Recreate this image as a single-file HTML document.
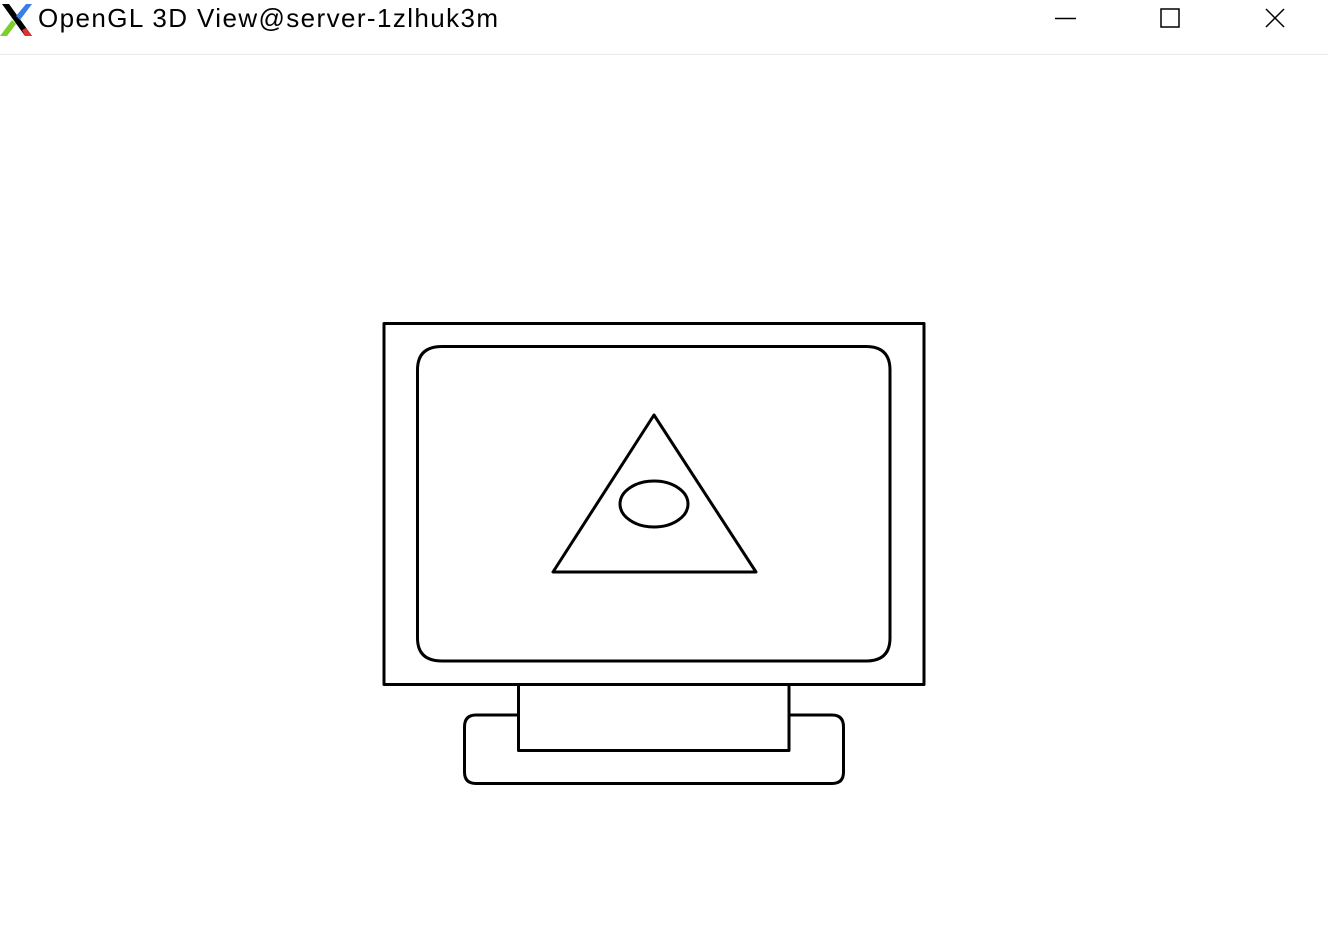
<!DOCTYPE html>
<html><head><style>
body{margin:0;width:1328px;height:948px;background:#fff;overflow:hidden;font-family:"Liberation Sans",sans-serif}
.bar{position:absolute;left:0;top:0;width:1328px;height:54px;border-bottom:1px solid #e8ecf0}
.t{position:absolute;left:38px;top:3px;font-size:26px;letter-spacing:1.4px;color:#000}
</style></head><body>
<div class="bar">
<svg style="position:absolute;left:0;top:2px" width="34" height="36" viewBox="0 0 34 36">
<polygon points="2,2 9,2 32,34 25,34" fill="#000"/>
<polygon points="26,2 32,2 20,18 16,14" fill="#3a7ee8"/>
<polygon points="0,34 7,34 16,22 12,18" fill="#7ccf2a"/>
<polygon points="25,34 32,34 26,26 22,28" fill="#e23030"/>
</svg>
<div class="t">OpenGL 3D View@server-1zlhuk3m</div>
<svg style="position:absolute;left:1050px;top:5px" width="240" height="30">
<line x1="5" y1="13.5" x2="26" y2="13.5" stroke="#000" stroke-width="1.5"/>
<rect x="111" y="4" width="18" height="18" fill="none" stroke="#000" stroke-width="1.5"/>
<path d="M216 4 L234 22 M234 4 L216 22" stroke="#000" stroke-width="1.5"/>
</svg>
</div>
<svg style="position:absolute;left:0;top:0" width="1328" height="948">
<g fill="none" stroke="#000" stroke-width="3" stroke-linejoin="round">
<rect x="384" y="323.5" width="540" height="361"/>
<path d="M442 346.5 H866 Q890 346.5 890 370 V638 Q890 661 866 661 H442 Q417.5 661 417.5 638 V370 Q417.5 346.5 442 346.5 Z"/>
<path d="M518.5 684 V750.5 H789 V684"/>
<path d="M518.5 715 H476 Q464.5 715 464.5 727 V772 Q464.5 783.5 476 783.5 H832 Q843.5 783.5 843.5 772 V727 Q843.5 715 832 715 H789"/>
<polygon points="654,415 553,572 756,572"/>
<ellipse cx="654" cy="504" rx="34" ry="23"/>
</g>
</svg>
</body></html>
